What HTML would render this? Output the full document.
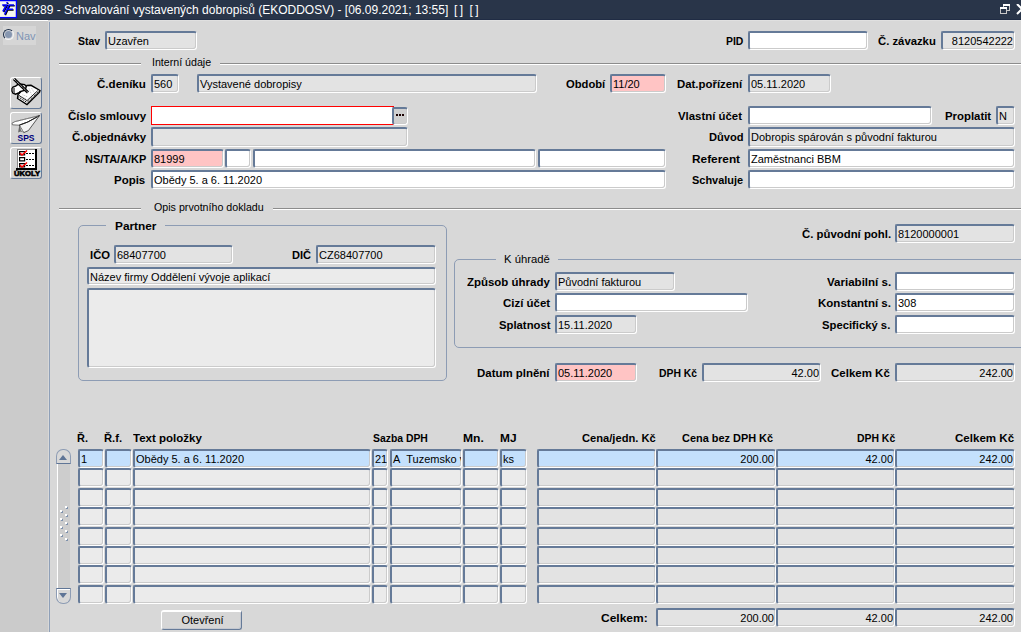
<!DOCTYPE html>
<html><head><meta charset="utf-8"><style>
html,body{margin:0;padding:0;}
body{width:1021px;height:632px;position:relative;overflow:hidden;background:#d8d8d8;font-family:"Liberation Sans",sans-serif;}
div{box-sizing:border-box;}
.f{position:absolute;border-top:2px solid #657a98;border-left:2px solid #657a98;border-right:1px solid #fff;border-bottom:1px solid #fff;box-shadow:inset -1px -1px 0 #cbcbcb;border-radius:2px 3px 3px 3px;overflow:hidden;}
.ft{position:absolute;top:2px;font-size:11px;line-height:13px;color:#000;white-space:pre;}
.lb{position:absolute;font-size:11.5px;font-weight:bold;line-height:16px;color:#000;white-space:pre;}
.ln{position:absolute;font-size:11px;line-height:16px;color:#000;white-space:pre;}
.sep{position:absolute;height:2px;border-top:1px solid #8c8c8c;border-bottom:1px solid #fff;}
.gb{position:absolute;border:1px solid #8d9cb4;border-radius:5px;}
.sb{position:absolute;background:#cdcdcd;border-left:1px solid #fff;}
.sbtn{position:absolute;background:#d8d8d8;border:1px solid #8d9cb4;}
.tri{position:absolute;left:3px;width:0;height:0;border-left:4px solid transparent;border-right:4px solid transparent;}
.tri.up{top:5px;left:2px;border-left-width:4px;border-right-width:4px;border-bottom:5px solid #5f7596;}
.tri.dn{top:4px;left:2px;border-top:5px solid #5f7596;}
.dot{position:absolute;width:2px;height:2px;background:#fff;box-shadow:1px 1px 0 #7f92ad;}
.btn{position:absolute;background:#d6d6d6;border-top:2px solid #fff;border-left:1px solid #fff;border-right:1px solid #657a98;border-bottom:1px solid #657a98;box-shadow:inset -1px -1px 0 #c4c8d0;border-radius:3px;font-size:11px;text-align:center;line-height:16px;color:#000;padding-left:2px;}
#title{position:absolute;left:0;top:0;width:1021px;height:20px;background:#293549;border-bottom:1px solid #202c44;}
#ttext{position:absolute;left:20px;top:2px;font-size:12px;line-height:16px;color:#fff;white-space:pre;}
.tt2{position:absolute;top:2px;font-size:12px;line-height:16px;color:#fff;white-space:pre;letter-spacing:-0.5px}
#lp{position:absolute;left:0;top:20px;width:48px;height:612px;background:#cbcbcb;border-top:1px solid #fff;}
#lpline{position:absolute;left:49px;top:22px;width:1px;height:610px;background:#8fa0b8;}
.tb{position:absolute;left:10px;width:33px;height:33px;overflow:hidden;background:#d4d4d4;border-top:1px solid #fff;border-left:1px solid #fff;border-right:1px solid #657a98;border-bottom:1px solid #657a98;border-radius:3px;}
</style></head><body>
<div id="title">
  <svg style="position:absolute;left:0;top:0" width="18" height="19" viewBox="0 0 18 19">
    <rect x="-1" y="0.6" width="17.4" height="17" fill="#f6f6ee" stroke="#0000ff" stroke-width="1.3"/>
    <g transform="translate(0.7,0.7)" stroke="#000" stroke-width="1.6" stroke-linecap="butt" fill="none">
      <path d="M2.2 5 L6.4 5 L2.9 11.5"/><path d="M9 5 L4.6 14.5 M8.6 5 L14 5 M6.6 9.3 L12.9 9.3"/><path d="M6.3 2.8 L7.9 2.8"/>
    </g>
    <g stroke="#0000ff" stroke-width="1.6" stroke-linecap="butt" fill="none">
      <path d="M2.2 5 L6.4 5 L2.9 11.5"/><path d="M9 5 L4.6 14.5 M8.6 5 L14 5 M6.6 9.3 L12.9 9.3"/><path d="M6.3 2.8 L7.9 2.8"/>
    </g>
  </svg>
  <div id="ttext">03289 - Schvalování vystavených dobropisů (EKODDOSV) - [06.09.2021; 13:55]</div><div class="tt2" style="left:454px">[ ]</div><div class="tt2" style="left:469.5px">[ ]</div>
  <svg style="position:absolute;left:998px;top:3px" width="14" height="13" viewBox="0 0 14 13">
    <rect x="5.5" y="1.5" width="6" height="6" fill="none" stroke="#c8c8c8"/><rect x="5" y="1" width="7" height="2" fill="#fff"/>
    <rect x="2.5" y="4.5" width="6" height="6" fill="#293549" stroke="#c8c8c8"/><rect x="2" y="4" width="7" height="2" fill="#fff"/>
  </svg>
  <svg style="position:absolute;left:1016px;top:4px" width="8" height="11"><path d="M1 0 L6 5 L1 10" stroke="#fff" stroke-width="2" fill="none"/></svg>
</div>
<div id="lp"></div>
<div style="position:absolute;left:50px;top:20px;width:971px;height:1px;background:#e0e0e0"></div>
<div id="lpline"></div>
<div style="position:absolute;left:3px;top:26px;width:33px;height:19px;background:#d6d6d6"></div>
<div style="position:absolute;left:3px;top:29px;width:11px;height:11px;border-radius:50%;border:1px solid #1f2f48;border-right-color:#f4f4f4;border-bottom-color:#f4f4f4;background:#d4d7dc"></div><div style="position:absolute;left:5px;top:31px;width:7px;height:7px;border-radius:50%;background:#8797b0"></div>
<div style="position:absolute;left:16px;top:28px;font-size:11px;line-height:16px;color:#7f95b5">Nav</div>
<div class="tb" style="top:77px;height:32px;width:32px"><svg width="32" height="32" style="position:absolute;left:-1px;top:-1px">
<path d="M8 17.5 L17 8.5 L21 8.3 L30 13.5 L29.5 15.2 L17 27.5 L7.5 21.5 Z" fill="#fff" stroke="#000" stroke-width="1.4"/>
<path d="M8.2 19.8 L17 25.4 L28.8 14.3" stroke="#000" stroke-width="1" stroke-dasharray="1.2 0.8" fill="none"/><path d="M8.6 18.2 L17 23.6 L27.8 13.6" stroke="#000" stroke-width="0.9" fill="none"/>
<path d="M11.5 19.5 L16 21.5 M12.5 17.8 L17.5 19.8 M19 11.5 L21.5 17.5 M21.5 11 L24.5 16" stroke="#aaa" stroke-width="0.8" stroke-dasharray="1 1" fill="none"/>
<path d="M2 11.6 L3 10 L5.6 9.1 L7.6 7.6 L10 7 L14.7 7.6 L16.2 9.6 L15.2 13.2 L10 14.7 L9.1 15.7 L5.6 17.2 L3 16.2 L2 14.2 Z" fill="#fff" stroke="#000" stroke-width="1.4"/>
<path d="M2.6 11 L5 11 L5 16.3 L3 15.8 Z" fill="#777"/>
<path d="M4 2 L18 15.5" stroke="#000" stroke-width="3"/>
<path d="M4 2 L18 15.5" stroke="#fff" stroke-width="0.9" stroke-dasharray="1.2 0.8"/>
</svg></div>
<div class="tb" style="top:112px;height:32px;width:32px"><svg width="32" height="32" style="position:absolute;left:-1px;top:-1px">
<path d="M2 11.2 L5 9.6 L29.5 3.6 L17.8 10 L9.3 13.2 L2.4 12.8 Z" fill="#fff" stroke="#555" stroke-width="0.8"/>
<path d="M17.8 10 L29.5 3.6 L18.4 18.6 L13.8 20.6 L9.3 13.2 Z" fill="#f4f4f4" stroke="#333" stroke-width="0.8"/>
<path d="M9.3 13.2 L8.1 20.6 L10.5 19.5 L13.8 20.6 Z" fill="#666"/>
<path d="M10 14.5 L11 19 L13.5 20 Z" fill="#bbb"/>
<path d="M9.3 13.2 L17.8 10 L29.5 3.6" stroke="#222" stroke-width="1" fill="none"/>
<path d="M5 9.6 L29.5 3.6" stroke="#888" stroke-width="0.8" stroke-dasharray="1.5 1" fill="none"/>
<text x="16" y="28.5" text-anchor="middle" font-family="Liberation Sans" font-weight="bold" font-size="8.5" fill="#00007a" textLength="17" lengthAdjust="spacingAndGlyphs">SPS</text>
</svg></div>
<div class="tb" style="top:147px;height:32px;width:32px"><svg width="32" height="32" style="position:absolute;left:-1px;top:-1px" shape-rendering="crispEdges">
<rect x="8" y="3" width="17" height="18" fill="#fff"/>
<rect x="7" y="2" width="18" height="1" fill="#888"/><rect x="7" y="2" width="1" height="19" fill="#888"/>
<rect x="25" y="2" width="2" height="21" fill="#000"/><rect x="6" y="21" width="21" height="2" fill="#000"/>
<path d="M9.6 4.6 h5 v3.2 h-5 Z M9.6 10.6 h5 v3.2 h-5 Z M9.6 16.6 h5 v3.2 h-5 Z" fill="none" stroke="#000" stroke-width="1.2" shape-rendering="auto"/>
<path d="M10 6 L12 8 L17 3.5" stroke="#f00" stroke-width="1.5" fill="none" shape-rendering="auto"/>
<path d="M10 18 L12 20 L17 15.5" stroke="#f00" stroke-width="1.5" fill="none" shape-rendering="auto"/>
<path d="M16 6.5 H24 M16 12.5 H24 M16 18.5 H24" stroke="#000" stroke-width="1" stroke-dasharray="2 1"/>
<text x="17" y="29" text-anchor="middle" font-family="Liberation Sans" font-weight="bold" font-size="7.5" fill="#000" stroke="#000" stroke-width="0.6" textLength="26" lengthAdjust="spacingAndGlyphs" shape-rendering="auto">ÚKOLY</text>
</svg></div>
<div class='lb' style='left:78.00px;top:33px;transform:scaleX(0.9083);transform-origin:0 0'>Stav</div>
<div class='f ' style='left:105px;top:31px;width:92px;height:19px;background:#e3e3e3;'><span class='ft' style='left:1px'>Uzavřen</span></div>
<div class='lb' style='left:725.79px;top:33px;transform:scaleX(0.9056);transform-origin:0 0'>PID</div>
<div class='f ' style='left:748px;top:31px;width:120px;height:19px;background:#ffffff;'></div>
<div class='lb' style='left:878.00px;top:33px;transform:scaleX(0.9828);transform-origin:0 0'>Č. závazku</div>
<div class='f ' style='left:941px;top:31px;width:74px;height:19px;background:#e3e3e3;'><span class='ft' style='right:1px'>8120542222</span></div>
<div class='sep' style='left:59px;top:63px;width:82px'></div>
<div class='sep' style='left:220px;top:63px;width:801px'></div>
<div class='ln' style='left:152.03px;top:54px;transform:scaleX(0.9667);transform-origin:0 0'>Interní údaje</div>
<div class='lb' style='left:97.30px;top:76px;transform:scaleX(1.0062);transform-origin:0 0'>Č.deníku</div>
<div class='f ' style='left:151px;top:74px;width:28px;height:19px;background:#e3e3e3;'><span class='ft' style='left:1px'>560</span></div>
<div class='f ' style='left:197px;top:74px;width:340px;height:19px;background:#e3e3e3;'><span class='ft' style='left:1px'>Vystavené dobropisy</span></div>
<div class='lb' style='left:566.00px;top:76px;transform:scaleX(0.9750);transform-origin:0 0'>Období</div>
<div class='f ' style='left:610px;top:74px;width:56px;height:19px;background:#ffc4c4;'><span class='ft' style='left:1px'>11/20</span></div>
<div class='lb' style='left:677.01px;top:76px;transform:scaleX(0.9908);transform-origin:0 0'>Dat.pořízení</div>
<div class='f ' style='left:748px;top:74px;width:83px;height:19px;background:#e3e3e3;'><span class='ft' style='left:1px'>05.11.2020</span></div>
<div class='lb' style='left:67.80px;top:108px;transform:scaleX(1.0026);transform-origin:0 0'>Číslo smlouvy</div>
<div style='position:absolute;left:151px;top:106px;width:243px;height:19px;border:1px solid #ff0000;background:#fff'></div>
<div class='f' style='left:392px;top:107px;width:16px;height:18px;background:#d0d0d0'><span style='position:absolute;left:2px;top:5px;width:2px;height:2px;background:#1a0000;box-shadow:3px 0 0 #1a0000, 6px 0 0 #1a0000'></span></div>
<div class='lb' style='left:678.00px;top:108px;transform:scaleX(0.9908);transform-origin:0 0'>Vlastní účet</div>
<div class='f ' style='left:748px;top:106px;width:184px;height:19px;background:#ffffff;'></div>
<div class='lb' style='left:944.51px;top:108px;transform:scaleX(0.9891);transform-origin:0 0'>Proplatit</div>
<div class='f ' style='left:996px;top:106px;width:19px;height:19px;background:#e3e3e3;'><span class='ft' style='left:1px'>N</span></div>
<div class='lb' style='left:71.60px;top:129px;transform:scaleX(0.9920);transform-origin:0 0'>Č.objednávky</div>
<div class='f ' style='left:151px;top:127px;width:257px;height:20px;background:#e3e3e3;'></div>
<div class='lb' style='left:708.53px;top:129px;transform:scaleX(0.9676);transform-origin:0 0'>Důvod</div>
<div class='f ' style='left:748px;top:127px;width:267px;height:20px;background:#e3e3e3;'><span class='ft' style='left:1px'>Dobropis spárován s původní fakturou</span></div>
<div class='lb' style='left:85.05px;top:151px;transform:scaleX(0.9524);transform-origin:0 0'>NS/TA/A/KP</div>
<div class='f ' style='left:151px;top:149px;width:73px;height:19px;background:#ffc4c4;'><span class='ft' style='left:1px'>81999</span></div>
<div class='f ' style='left:225px;top:149px;width:26px;height:19px;background:#ffffff;'></div>
<div class='f ' style='left:253px;top:149px;width:283px;height:19px;background:#ffffff;'></div>
<div class='f ' style='left:538px;top:149px;width:128px;height:19px;background:#ffffff;'></div>
<div class='lb' style='left:691.77px;top:151px;transform:scaleX(1.0304);transform-origin:0 0'>Referent</div>
<div class='f ' style='left:748px;top:149px;width:267px;height:19px;background:#ffffff;'><span class='ft' style='left:1px'>Zaměstnanci BBM</span></div>
<div class='lb' style='left:114.40px;top:172px;transform:scaleX(0.9967);transform-origin:0 0'>Popis</div>
<div class='f ' style='left:151px;top:170px;width:515px;height:19px;background:#ffffff;'><span class='ft' style='left:1px'>Obědy 5. a 6. 11.2020</span></div>
<div class='lb' style='left:692.00px;top:172px;transform:scaleX(0.9509);transform-origin:0 0'>Schvaluje</div>
<div class='f ' style='left:748px;top:170px;width:267px;height:19px;background:#ffffff;'></div>
<div class='sep' style='left:59px;top:208px;width:82px'></div>
<div class='sep' style='left:273px;top:208px;width:748px'></div>
<div class='ln' style='left:154.00px;top:199px;transform:scaleX(0.9699);transform-origin:0 0'>Opis prvotního dokladu</div>
<div class='gb' style='left:78px;top:225px;width:369px;height:156px'></div>
<div style='position:absolute;left:106px;top:220px;width:59px;height:10px;background:#d8d8d8'></div>
<div class='lb' style='left:114.77px;top:218px;transform:scaleX(1.0282);transform-origin:0 0'>Partner</div>
<div class='lb' style='left:90.12px;top:247px;transform:scaleX(0.9789);transform-origin:0 0'>IČO</div>
<div class='f ' style='left:114px;top:245px;width:119px;height:19px;background:#e3e3e3;'><span class='ft' style='left:1px'>68407700</span></div>
<div class='lb' style='left:292.34px;top:247px;transform:scaleX(0.9611);transform-origin:0 0'>DIČ</div>
<div class='f ' style='left:316px;top:245px;width:120px;height:19px;background:#e3e3e3;'><span class='ft' style='left:1px'>CZ68407700</span></div>
<div class='f ' style='left:87px;top:267px;width:349px;height:18px;background:#ebebeb;'><span class='ft' style='left:1px'>Název firmy Oddělení vývoje aplikací</span></div>
<div class='f ' style='left:87px;top:288px;width:349px;height:80px;background:#ebebeb;'></div>
<div class='lb' style='left:802.00px;top:226px;transform:scaleX(0.9888);transform-origin:0 0'>Č. původní pohl.</div>
<div class='f ' style='left:895px;top:224px;width:120px;height:19px;background:#e3e3e3;'><span class='ft' style='left:1px'>8120000001</span></div>
<div class='gb' style='left:454px;top:259px;width:600px;height:89px'></div>
<div style='position:absolute;left:496px;top:254px;width:62px;height:10px;background:#d8d8d8'></div>
<div class='ln' style='left:503.98px;top:251px;transform:scaleX(1.0233);transform-origin:0 0'>K úhradě</div>
<div class='lb' style='left:467.00px;top:274px;transform:scaleX(0.9964);transform-origin:0 0'>Způsob úhrady</div>
<div class='f ' style='left:555px;top:272px;width:120px;height:19px;background:#e3e3e3;'><span class='ft' style='left:1px'>Původní fakturou</span></div>
<div class='lb' style='left:503.00px;top:295px;transform:scaleX(0.9979);transform-origin:0 0'>Cizí účet</div>
<div class='f ' style='left:555px;top:293px;width:193px;height:19px;background:#ffffff;'></div>
<div class='lb' style='left:498.80px;top:317px;transform:scaleX(0.9827);transform-origin:0 0'>Splatnost</div>
<div class='f ' style='left:555px;top:315px;width:82px;height:19px;background:#e3e3e3;'><span class='ft' style='left:1px'>15.11.2020</span></div>
<div class='lb' style='left:826.50px;top:274px;transform:scaleX(1.0032);transform-origin:0 0'>Variabilní s.</div>
<div class='f ' style='left:895px;top:272px;width:120px;height:19px;background:#ffffff;'></div>
<div class='lb' style='left:817.60px;top:295px;transform:scaleX(1.0014);transform-origin:0 0'>Konstantní s.</div>
<div class='f ' style='left:895px;top:293px;width:120px;height:19px;background:#ffffff;'><span class='ft' style='left:1px'>308</span></div>
<div class='lb' style='left:822.10px;top:317px;transform:scaleX(0.9797);transform-origin:0 0'>Specifický s.</div>
<div class='f ' style='left:895px;top:315px;width:120px;height:19px;background:#ffffff;'></div>
<div class='lb' style='left:477.20px;top:365px;transform:scaleX(0.9958);transform-origin:0 0'>Datum plnění</div>
<div class='f ' style='left:555px;top:363px;width:82px;height:19px;background:#ffc4c4;'><span class='ft' style='left:1px'>05.11.2020</span></div>
<div class='lb' style='left:659.10px;top:365px;transform:scaleX(0.9024);transform-origin:0 0'>DPH Kč</div>
<div class='f ' style='left:702px;top:363px;width:119px;height:19px;background:#e3e3e3;'><span class='ft' style='right:1px'>42.00</span></div>
<div class='lb' style='left:831.00px;top:365px;transform:scaleX(1.0000);transform-origin:0 0'>Celkem Kč</div>
<div class='f ' style='left:895px;top:363px;width:120px;height:19px;background:#e3e3e3;'><span class='ft' style='right:1px'>242.00</span></div>
<div class='lb' style='left:77.35px;top:430px;transform:scaleX(0.9500);transform-origin:0 0'>Ř.</div>
<div class='lb' style='left:104.22px;top:430px;transform:scaleX(0.9765);transform-origin:0 0'>Ř.f.</div>
<div class='lb' style='left:133.40px;top:430px;transform:scaleX(1.0014);transform-origin:0 0'>Text položky</div>
<div class='lb' style='left:373.20px;top:430px;transform:scaleX(0.9033);transform-origin:0 0'>Sazba DPH</div>
<div class='lb' style='left:462.65px;top:430px;transform:scaleX(1.0500);transform-origin:0 0'>Mn.</div>
<div class='lb' style='left:499.66px;top:430px;transform:scaleX(1.0357);transform-origin:0 0'>MJ</div>
<div class='lb' style='left:582.30px;top:430px;transform:scaleX(0.9697);transform-origin:0 0'>Cena/jedn. Kč</div>
<div class='lb' style='left:682.10px;top:430px;transform:scaleX(0.9500);transform-origin:0 0'>Cena bez DPH Kč</div>
<div class='lb' style='left:857.40px;top:430px;transform:scaleX(0.9049);transform-origin:0 0'>DPH Kč</div>
<div class='lb' style='left:955.00px;top:430px;transform:scaleX(1.0051);transform-origin:0 0'>Celkem Kč</div>
<div class='f ' style='left:78px;top:449px;width:26px;height:19px;background:#c4e0fc;'><span class='ft' style='left:1px'>1</span></div>
<div class='f ' style='left:105px;top:449px;width:27px;height:19px;background:#c4e0fc;'></div>
<div class='f ' style='left:133px;top:449px;width:238px;height:19px;background:#c4e0fc;'><span class='ft' style='left:1px'>Obědy 5. a 6. 11.2020</span></div>
<div class='f ' style='left:372px;top:449px;width:16px;height:19px;background:#c4e0fc;'><span class='ft' style='left:1px'>21</span></div>
<div class='f ' style='left:390px;top:449px;width:72px;height:19px;background:#c4e0fc;'><span class='ft' style='left:1px'>A&nbsp; Tuzemsko v</span></div>
<div class='f ' style='left:463px;top:449px;width:36px;height:19px;background:#c4e0fc;'></div>
<div class='f ' style='left:500px;top:449px;width:27px;height:19px;background:#c4e0fc;'><span class='ft' style='left:1px'>ks</span></div>
<div class='f ' style='left:537px;top:449px;width:119px;height:19px;background:#c4e0fc;'></div>
<div class='f ' style='left:656px;top:449px;width:120px;height:19px;background:#c4e0fc;'><span class='ft' style='right:1px'>200.00</span></div>
<div class='f ' style='left:776px;top:449px;width:119px;height:19px;background:#c4e0fc;'><span class='ft' style='right:1px'>42.00</span></div>
<div class='f ' style='left:895px;top:449px;width:120px;height:19px;background:#c4e0fc;'><span class='ft' style='right:1px'>242.00</span></div>
<div class='f ' style='left:78px;top:468px;width:26px;height:19px;background:#ebebeb;'></div>
<div class='f ' style='left:105px;top:468px;width:27px;height:19px;background:#ebebeb;'></div>
<div class='f ' style='left:133px;top:468px;width:238px;height:19px;background:#ebebeb;'></div>
<div class='f ' style='left:372px;top:468px;width:16px;height:19px;background:#ebebeb;'></div>
<div class='f ' style='left:390px;top:468px;width:72px;height:19px;background:#ebebeb;'></div>
<div class='f ' style='left:463px;top:468px;width:36px;height:19px;background:#ebebeb;'></div>
<div class='f ' style='left:500px;top:468px;width:27px;height:19px;background:#ebebeb;'></div>
<div class='f ' style='left:537px;top:468px;width:119px;height:19px;background:#e3e3e3;'></div>
<div class='f ' style='left:656px;top:468px;width:120px;height:19px;background:#e3e3e3;'></div>
<div class='f ' style='left:776px;top:468px;width:119px;height:19px;background:#e3e3e3;'></div>
<div class='f ' style='left:895px;top:468px;width:120px;height:19px;background:#e3e3e3;'></div>
<div class='f ' style='left:78px;top:488px;width:26px;height:19px;background:#ebebeb;'></div>
<div class='f ' style='left:105px;top:488px;width:27px;height:19px;background:#ebebeb;'></div>
<div class='f ' style='left:133px;top:488px;width:238px;height:19px;background:#ebebeb;'></div>
<div class='f ' style='left:372px;top:488px;width:16px;height:19px;background:#ebebeb;'></div>
<div class='f ' style='left:390px;top:488px;width:72px;height:19px;background:#ebebeb;'></div>
<div class='f ' style='left:463px;top:488px;width:36px;height:19px;background:#ebebeb;'></div>
<div class='f ' style='left:500px;top:488px;width:27px;height:19px;background:#ebebeb;'></div>
<div class='f ' style='left:537px;top:488px;width:119px;height:19px;background:#e3e3e3;'></div>
<div class='f ' style='left:656px;top:488px;width:120px;height:19px;background:#e3e3e3;'></div>
<div class='f ' style='left:776px;top:488px;width:119px;height:19px;background:#e3e3e3;'></div>
<div class='f ' style='left:895px;top:488px;width:120px;height:19px;background:#e3e3e3;'></div>
<div class='f ' style='left:78px;top:507px;width:26px;height:19px;background:#ebebeb;'></div>
<div class='f ' style='left:105px;top:507px;width:27px;height:19px;background:#ebebeb;'></div>
<div class='f ' style='left:133px;top:507px;width:238px;height:19px;background:#ebebeb;'></div>
<div class='f ' style='left:372px;top:507px;width:16px;height:19px;background:#ebebeb;'></div>
<div class='f ' style='left:390px;top:507px;width:72px;height:19px;background:#ebebeb;'></div>
<div class='f ' style='left:463px;top:507px;width:36px;height:19px;background:#ebebeb;'></div>
<div class='f ' style='left:500px;top:507px;width:27px;height:19px;background:#ebebeb;'></div>
<div class='f ' style='left:537px;top:507px;width:119px;height:19px;background:#e3e3e3;'></div>
<div class='f ' style='left:656px;top:507px;width:120px;height:19px;background:#e3e3e3;'></div>
<div class='f ' style='left:776px;top:507px;width:119px;height:19px;background:#e3e3e3;'></div>
<div class='f ' style='left:895px;top:507px;width:120px;height:19px;background:#e3e3e3;'></div>
<div class='f ' style='left:78px;top:527px;width:26px;height:19px;background:#ebebeb;'></div>
<div class='f ' style='left:105px;top:527px;width:27px;height:19px;background:#ebebeb;'></div>
<div class='f ' style='left:133px;top:527px;width:238px;height:19px;background:#ebebeb;'></div>
<div class='f ' style='left:372px;top:527px;width:16px;height:19px;background:#ebebeb;'></div>
<div class='f ' style='left:390px;top:527px;width:72px;height:19px;background:#ebebeb;'></div>
<div class='f ' style='left:463px;top:527px;width:36px;height:19px;background:#ebebeb;'></div>
<div class='f ' style='left:500px;top:527px;width:27px;height:19px;background:#ebebeb;'></div>
<div class='f ' style='left:537px;top:527px;width:119px;height:19px;background:#e3e3e3;'></div>
<div class='f ' style='left:656px;top:527px;width:120px;height:19px;background:#e3e3e3;'></div>
<div class='f ' style='left:776px;top:527px;width:119px;height:19px;background:#e3e3e3;'></div>
<div class='f ' style='left:895px;top:527px;width:120px;height:19px;background:#e3e3e3;'></div>
<div class='f ' style='left:78px;top:546px;width:26px;height:19px;background:#ebebeb;'></div>
<div class='f ' style='left:105px;top:546px;width:27px;height:19px;background:#ebebeb;'></div>
<div class='f ' style='left:133px;top:546px;width:238px;height:19px;background:#ebebeb;'></div>
<div class='f ' style='left:372px;top:546px;width:16px;height:19px;background:#ebebeb;'></div>
<div class='f ' style='left:390px;top:546px;width:72px;height:19px;background:#ebebeb;'></div>
<div class='f ' style='left:463px;top:546px;width:36px;height:19px;background:#ebebeb;'></div>
<div class='f ' style='left:500px;top:546px;width:27px;height:19px;background:#ebebeb;'></div>
<div class='f ' style='left:537px;top:546px;width:119px;height:19px;background:#e3e3e3;'></div>
<div class='f ' style='left:656px;top:546px;width:120px;height:19px;background:#e3e3e3;'></div>
<div class='f ' style='left:776px;top:546px;width:119px;height:19px;background:#e3e3e3;'></div>
<div class='f ' style='left:895px;top:546px;width:120px;height:19px;background:#e3e3e3;'></div>
<div class='f ' style='left:78px;top:565px;width:26px;height:19px;background:#ebebeb;'></div>
<div class='f ' style='left:105px;top:565px;width:27px;height:19px;background:#ebebeb;'></div>
<div class='f ' style='left:133px;top:565px;width:238px;height:19px;background:#ebebeb;'></div>
<div class='f ' style='left:372px;top:565px;width:16px;height:19px;background:#ebebeb;'></div>
<div class='f ' style='left:390px;top:565px;width:72px;height:19px;background:#ebebeb;'></div>
<div class='f ' style='left:463px;top:565px;width:36px;height:19px;background:#ebebeb;'></div>
<div class='f ' style='left:500px;top:565px;width:27px;height:19px;background:#ebebeb;'></div>
<div class='f ' style='left:537px;top:565px;width:119px;height:19px;background:#e3e3e3;'></div>
<div class='f ' style='left:656px;top:565px;width:120px;height:19px;background:#e3e3e3;'></div>
<div class='f ' style='left:776px;top:565px;width:119px;height:19px;background:#e3e3e3;'></div>
<div class='f ' style='left:895px;top:565px;width:120px;height:19px;background:#e3e3e3;'></div>
<div class='f ' style='left:78px;top:585px;width:26px;height:19px;background:#ebebeb;'></div>
<div class='f ' style='left:105px;top:585px;width:27px;height:19px;background:#ebebeb;'></div>
<div class='f ' style='left:133px;top:585px;width:238px;height:19px;background:#ebebeb;'></div>
<div class='f ' style='left:372px;top:585px;width:16px;height:19px;background:#ebebeb;'></div>
<div class='f ' style='left:390px;top:585px;width:72px;height:19px;background:#ebebeb;'></div>
<div class='f ' style='left:463px;top:585px;width:36px;height:19px;background:#ebebeb;'></div>
<div class='f ' style='left:500px;top:585px;width:27px;height:19px;background:#ebebeb;'></div>
<div class='f ' style='left:537px;top:585px;width:119px;height:19px;background:#e3e3e3;'></div>
<div class='f ' style='left:656px;top:585px;width:120px;height:19px;background:#e3e3e3;'></div>
<div class='f ' style='left:776px;top:585px;width:119px;height:19px;background:#e3e3e3;'></div>
<div class='f ' style='left:895px;top:585px;width:120px;height:19px;background:#e3e3e3;'></div>
<div class='sb' style='left:57px;top:464px;width:13px;height:124px'></div>
<div class='sbtn' style='left:56px;top:449px;width:15px;height:15px;border-radius:7px 7px 0 0;border-bottom-color:#5f7596'><div class='tri up'></div></div>
<div class='sbtn' style='left:56px;top:588px;width:15px;height:16px;border-radius:0 0 7px 7px;border-top-color:#5f7596;box-shadow:inset 1px 1px 0 #fff'><div class='tri dn'></div></div>
<div class='dot' style='left:65px;top:506px'></div>
<div class='dot' style='left:65px;top:514px'></div>
<div class='dot' style='left:65px;top:522px'></div>
<div class='dot' style='left:65px;top:530px'></div>
<div class='dot' style='left:65px;top:538px'></div>
<div class='dot' style='left:60px;top:510px'></div>
<div class='dot' style='left:60px;top:518px'></div>
<div class='dot' style='left:60px;top:526px'></div>
<div class='dot' style='left:60px;top:534px'></div>
<div class='btn' style='left:161px;top:610px;width:81px;height:20px'>Otevření</div>
<div class='lb' style='left:601.00px;top:610px;transform:scaleX(1.0432);transform-origin:0 0'>Celkem:</div>
<div class='f ' style='left:656px;top:608px;width:120px;height:19px;background:#e3e3e3;'><span class='ft' style='right:1px'>200.00</span></div>
<div class='f ' style='left:776px;top:608px;width:119px;height:19px;background:#e3e3e3;'><span class='ft' style='right:1px'>42.00</span></div>
<div class='f ' style='left:895px;top:608px;width:120px;height:19px;background:#e3e3e3;'><span class='ft' style='right:1px'>242.00</span></div>
</body></html>
